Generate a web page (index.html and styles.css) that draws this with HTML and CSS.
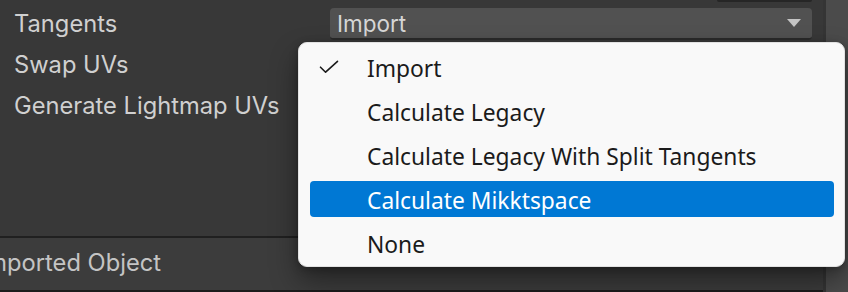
FILE: index.html
```html
<!DOCTYPE html>
<html>
<head>
<meta charset="utf-8">
<link rel="stylesheet" href="styles.css">
</head>
<body>
<div class="window">
  <div class="inspector">
    <div class="props">
      <div class="prev-field"></div>
      <div class="row">
        <span class="label">Tangents</span>
        <div class="dropdown">
          <span class="value">Import</span>
          <svg class="arrow" width="14" height="8" viewBox="0 0 14 8"><path d="M0 0 H14 L7 8 Z" fill="#c4c4c4"/></svg>
        </div>
      </div>
      <div class="row">
        <span class="label">Swap UVs</span>
      </div>
      <div class="row">
        <span class="label">Generate Lightmap UVs</span>
      </div>
    </div>
    <div class="section-header">
      <span class="section-title">Imported Object</span>
    </div>
  </div>
  <div class="scrollbar"></div>

  <div class="menu">
    <div class="item">
      <span class="check">
        <svg width="20" height="14" viewBox="0 0 20 14"><path d="M1.5 7.2 L6.6 12.2 L18.5 1.3" fill="none" stroke="#1b1b1b" stroke-width="1.6" stroke-linecap="round" stroke-linejoin="round"/></svg>
      </span>
      <span class="text">Import</span>
    </div>
    <div class="item"><span class="check"></span><span class="text">Calculate Legacy</span></div>
    <div class="item"><span class="check"></span><span class="text">Calculate Legacy With Split Tangents</span></div>
    <div class="item selected"><span class="check"></span><span class="text">Calculate Mikktspace</span></div>
    <div class="item"><span class="check"></span><span class="text">None</span></div>
  </div>
</div>
</body>
</html>
```
FILE: styles.css
```css
html, body {
  margin: 0;
  padding: 0;
}
body {
  width: 848px;
  height: 292px;
  overflow: hidden;
  background: #383838;
}
.window {
  position: relative;
  display: flex;
  width: 848px;
  height: 292px;
}
.inspector {
  width: 823px;
  display: flex;
  flex-direction: column;
}
.scrollbar {
  width: 3px;
  background: #353535;
  border-right: 22px solid #4b4b4b;
}
.props {
  height: 236px;
  background: #383838;
}
.prev-field {
  height: 2px;
  width: 95px;
  margin-left: 717px;
  background: #262626;
  border-radius: 0 0 3px 3px;
}
.row {
  height: 41px;
  display: flex;
  align-items: flex-start;
  padding-left: 14px;
}
.row:first-of-type { height: 40px; }
.label {
  width: 316px;
  font-family: "Inter", "Noto Sans", sans-serif;
  font-size: 23.7px;
  color: #d0d0d0;
  line-height: 29px;
  margin-top: 7px;
}
.dropdown {
  margin-top: 6px;
  width: 482px;
  height: 32px;
  box-sizing: border-box;
  background: #515151;
  border-radius: 4px;
  border-bottom: 2px solid #2b2b2b;
  display: flex;
  align-items: center;
  justify-content: space-between;
  padding: 0 11px 0 7px;
}
.value {
  font-family: "Inter", "Noto Sans", sans-serif;
  font-size: 22.5px;
  color: #d6d6d6;
  line-height: 27px;
}
.section-header {
  flex: 1;
  border-top: 2px solid #202020;
  border-bottom: 2px solid #1c1c1c;
  background: #3c3c3c;
  display: flex;
  align-items: center;
  overflow: hidden;
}
.section-title {
  margin-left: -20px;
  font-family: "Inter", "Noto Sans", sans-serif;
  font-size: 23.7px;
  color: #c4c4c4;
  line-height: 29px;
  white-space: nowrap;
  margin-top: -3px;
}
.menu {
  position: absolute;
  left: 298px;
  top: 42px;
  width: 547px;
  box-sizing: border-box;
  padding: 2px 0 1px;
  display: flex;
  flex-direction: column;
  background: #f9f9f9;
  border: 1px solid #e2e2e2;
  border-radius: 9px;
  box-shadow: 0 14px 28px rgba(0, 0, 0, 0.4), 0 2px 8px rgba(0,0,0,0.25);
}
.item {
  height: 36px;
  margin: 4px 10px 4px 11px;
  border-radius: 4px;
  display: flex;
  align-items: center;
  font-family: "Noto Sans", "Open Sans", sans-serif;
  font-size: 22.8px;
  color: #1b1b1b;
  padding-top: 2px;
  box-sizing: border-box;
}
.check {
  width: 57px;
  padding-left: 9px;
  box-sizing: border-box;
  display: flex;
  align-items: center;
  margin-top: -2px;
}
.item.selected {
  background: #0078d4;
  color: #ffffff;
}
```
